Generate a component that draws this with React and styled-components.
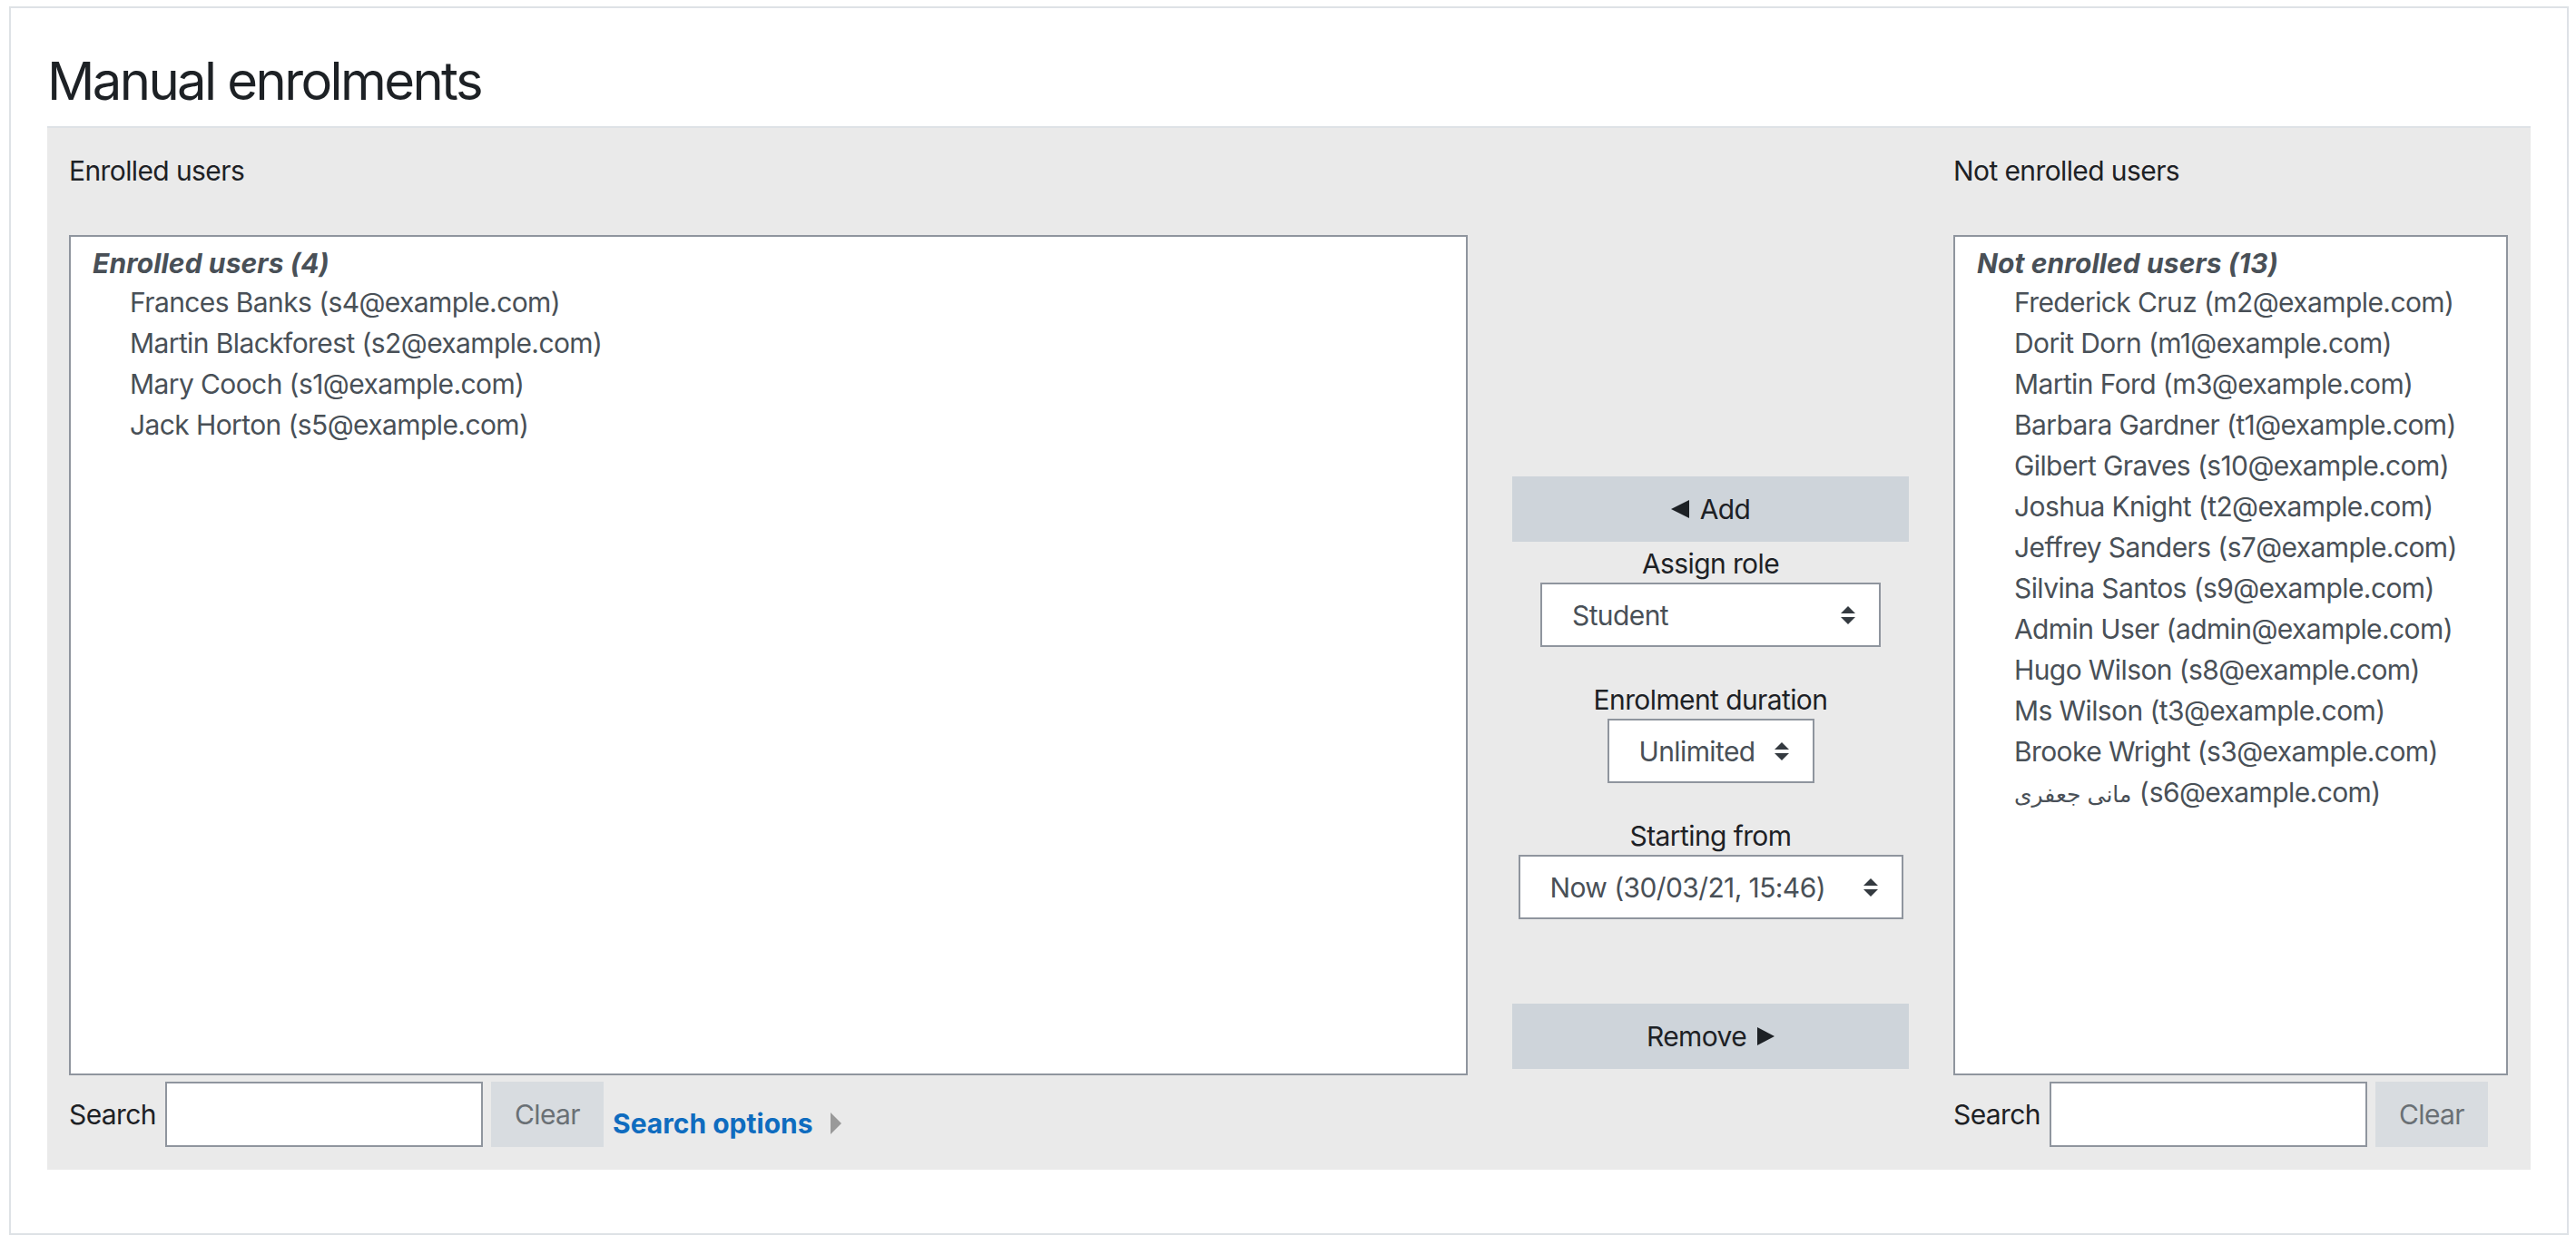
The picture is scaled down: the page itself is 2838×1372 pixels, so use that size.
import React from "react";
import styled, { createGlobalStyle } from "styled-components";

const GlobalStyle = createGlobalStyle`
  *, *::before, *::after { box-sizing: border-box; }
  body {
    margin: 0;
    background: #ffffff;
    font-family: Inter, "DejaVu Sans", sans-serif;
    color: #1d2125;
    letter-spacing: -0.6px;
  }
`;

const Page = styled.div`
  padding: 7px 8px 9px 10px;
`;

const Card = styled.section`
  border: 2px solid #dee2e6;
  padding: 44px 40px 70px 40px;
`;

const Title = styled.h2`
  margin: 0 0 14px 0;
  font-size: 58px;
  line-height: 72px;
  font-weight: 400;
  letter-spacing: -2.6px;
  color: #1d2125;
`;

const Panel = styled.div`
  border-top: 2px solid #dee2e6;
  background: #eaeaea;
  padding: 25px 25px 25px 24px;
  display: grid;
  grid-template-columns: 1fr 535px 611px;
  grid-template-rows: auto 926px auto;
`;

const ColumnLabel = styled.label`
  display: block;
  font-size: 30px;
  line-height: 45px;
  margin-bottom: 48px;
  color: #1d2125;
`;

const ListBox = styled.div`
  border: 2px solid #8f959e;
  background: #ffffff;
  padding: 4px 24px 0 24px;
  overflow: hidden;
  font-size: 30px;
  line-height: 45px;
  color: #495057;
`;

const GroupLabel = styled.div`
  font-weight: 700;
  font-style: italic;
  letter-spacing: 0.1px;
  padding-top: 3px;
  margin-bottom: -2px;
`;

const Option = styled.div`
  padding-left: 41px;
  white-space: nowrap;
`;

const Farsi = styled.span`
  font-size: 25px;
  letter-spacing: 0;
`;

const ActionColumn = styled.div`
  display: flex;
  flex-direction: column;
  align-items: center;
  padding-top: 266px;
`;

const ActionButton = styled.button`
  width: 437px;
  height: 72px;
  margin-top: ${(p) => p.$mt || 0}px;
  border: none;
  background: #ced4da;
  color: #1d2125;
  font-family: inherit;
  font-size: 30px;
  letter-spacing: -0.6px;
  display: flex;
  align-items: center;
  justify-content: center;
  gap: 12px;
  padding: 0;
  cursor: pointer;
`;

const FieldLabel = styled.label`
  display: block;
  font-size: 30px;
  line-height: 42px;
  margin-top: ${(p) => p.$mt}px;
  color: #1d2125;
  text-align: center;
`;

const SelectBox = styled.div`
  width: ${(p) => p.$w}px;
  height: 71px;
  border: 2px solid #8f959e;
  background: #ffffff;
  display: flex;
  align-items: center;
  justify-content: space-between;
  padding: 0 26px 0 33px;
  font-size: 30px;
  color: #495057;
  white-space: nowrap;
`;

const SearchRow = styled.div`
  display: flex;
  align-items: center;
  height: 72px;
  margin-top: 7px;
`;

const SearchLabel = styled.label`
  font-size: 30px;
  color: #1d2125;
  margin-right: 10px;
`;

const SearchInput = styled.input`
  width: 350px;
  height: 72px;
  border: 2px solid #8f959e;
  background: #ffffff;
  font-family: inherit;
  font-size: 30px;
  padding: 0 16px;
  outline: none;
`;

const ClearButton = styled.button`
  margin-left: 9px;
  height: 72px;
  padding: 0 26px;
  border: none;
  background: #d8dce0;
  color: #6a7075;
  font-family: inherit;
  font-size: 30px;
  letter-spacing: -0.6px;
`;

const OptionsLink = styled.a`
  margin-left: 10px;
  padding-top: 20px;
  display: flex;
  align-items: center;
  gap: 19px;
  font-size: 30px;
  font-weight: 700;
  letter-spacing: 0;
  color: #0f6cbf;
  text-decoration: none;
  cursor: pointer;
`;

const enrolled = [
  "Frances Banks (s4@example.com)",
  "Martin Blackforest (s2@example.com)",
  "Mary Cooch (s1@example.com)",
  "Jack Horton (s5@example.com)",
];

const notEnrolled = [
  "Frederick Cruz (m2@example.com)",
  "Dorit Dorn (m1@example.com)",
  "Martin Ford (m3@example.com)",
  "Barbara Gardner (t1@example.com)",
  "Gilbert Graves (s10@example.com)",
  "Joshua Knight (t2@example.com)",
  "Jeffrey Sanders (s7@example.com)",
  "Silvina Santos (s9@example.com)",
  "Admin User (admin@example.com)",
  "Hugo Wilson (s8@example.com)",
  "Ms Wilson (t3@example.com)",
  "Brooke Wright (s3@example.com)",
];

const Updown = () => (
  <svg width="16" height="20" viewBox="0 0 16 20">
    <polygon points="0,8 8,0 16,8" fill="#343a40" />
    <polygon points="0,12 16,12 8,20" fill="#343a40" />
  </svg>
);

const Arrow = ({ dir, size = 20, color = "#1d2125", w }) => (
  <svg width={w || size} height={size} viewBox="0 0 10 10" preserveAspectRatio="none">
    {dir === "left" ? (
      <polygon points="10,0 10,10 0,5" fill={color} />
    ) : (
      <polygon points="0,0 10,5 0,10" fill={color} />
    )}
  </svg>
);

function UserList({ title, users, children }) {
  return (
    <ListBox>
      <GroupLabel>{title}</GroupLabel>
      {users.map((u) => (
        <Option key={u}>{u}</Option>
      ))}
      {children}
    </ListBox>
  );
}

function Search({ withOptions }) {
  return (
    <SearchRow>
      <SearchLabel>Search</SearchLabel>
      <SearchInput type="text" />
      <ClearButton disabled>Clear</ClearButton>
      {withOptions && (
        <OptionsLink>
          Search options
          <Arrow dir="right" size={24} w={12} color="#999999" />
        </OptionsLink>
      )}
    </SearchRow>
  );
}

export default function App() {
  return (
    <Page>
      <GlobalStyle />
      <Card>
        <Title>Manual enrolments</Title>
        <Panel>
          <ColumnLabel>Enrolled users</ColumnLabel>
          <div />
          <ColumnLabel>Not enrolled users</ColumnLabel>

          <UserList title="Enrolled users (4)" users={enrolled} />
          <ActionColumn>
            <ActionButton>
              <Arrow dir="left" size={20} />
              Add
            </ActionButton>
            <FieldLabel $mt={3}>Assign role</FieldLabel>
            <SelectBox $w={375}>
              Student
              <Updown />
            </SelectBox>
            <FieldLabel $mt={37}>Enrolment duration</FieldLabel>
            <SelectBox $w={228}>
              Unlimited
              <Updown />
            </SelectBox>
            <FieldLabel $mt={37}>Starting from</FieldLabel>
            <SelectBox $w={424}>
              Now (30/03/21, 15:46)
              <Updown />
            </SelectBox>
            <ActionButton $mt={93}>
              Remove
              <Arrow dir="right" size={20} w={19} />
            </ActionButton>
          </ActionColumn>
          <UserList title="Not enrolled users (13)" users={notEnrolled}>
            <Option>
              <Farsi>مانی جعفری</Farsi> (s6@example.com)
            </Option>
          </UserList>

          <Search withOptions />
          <div />
          <Search />
        </Panel>
      </Card>
    </Page>
  );
}
